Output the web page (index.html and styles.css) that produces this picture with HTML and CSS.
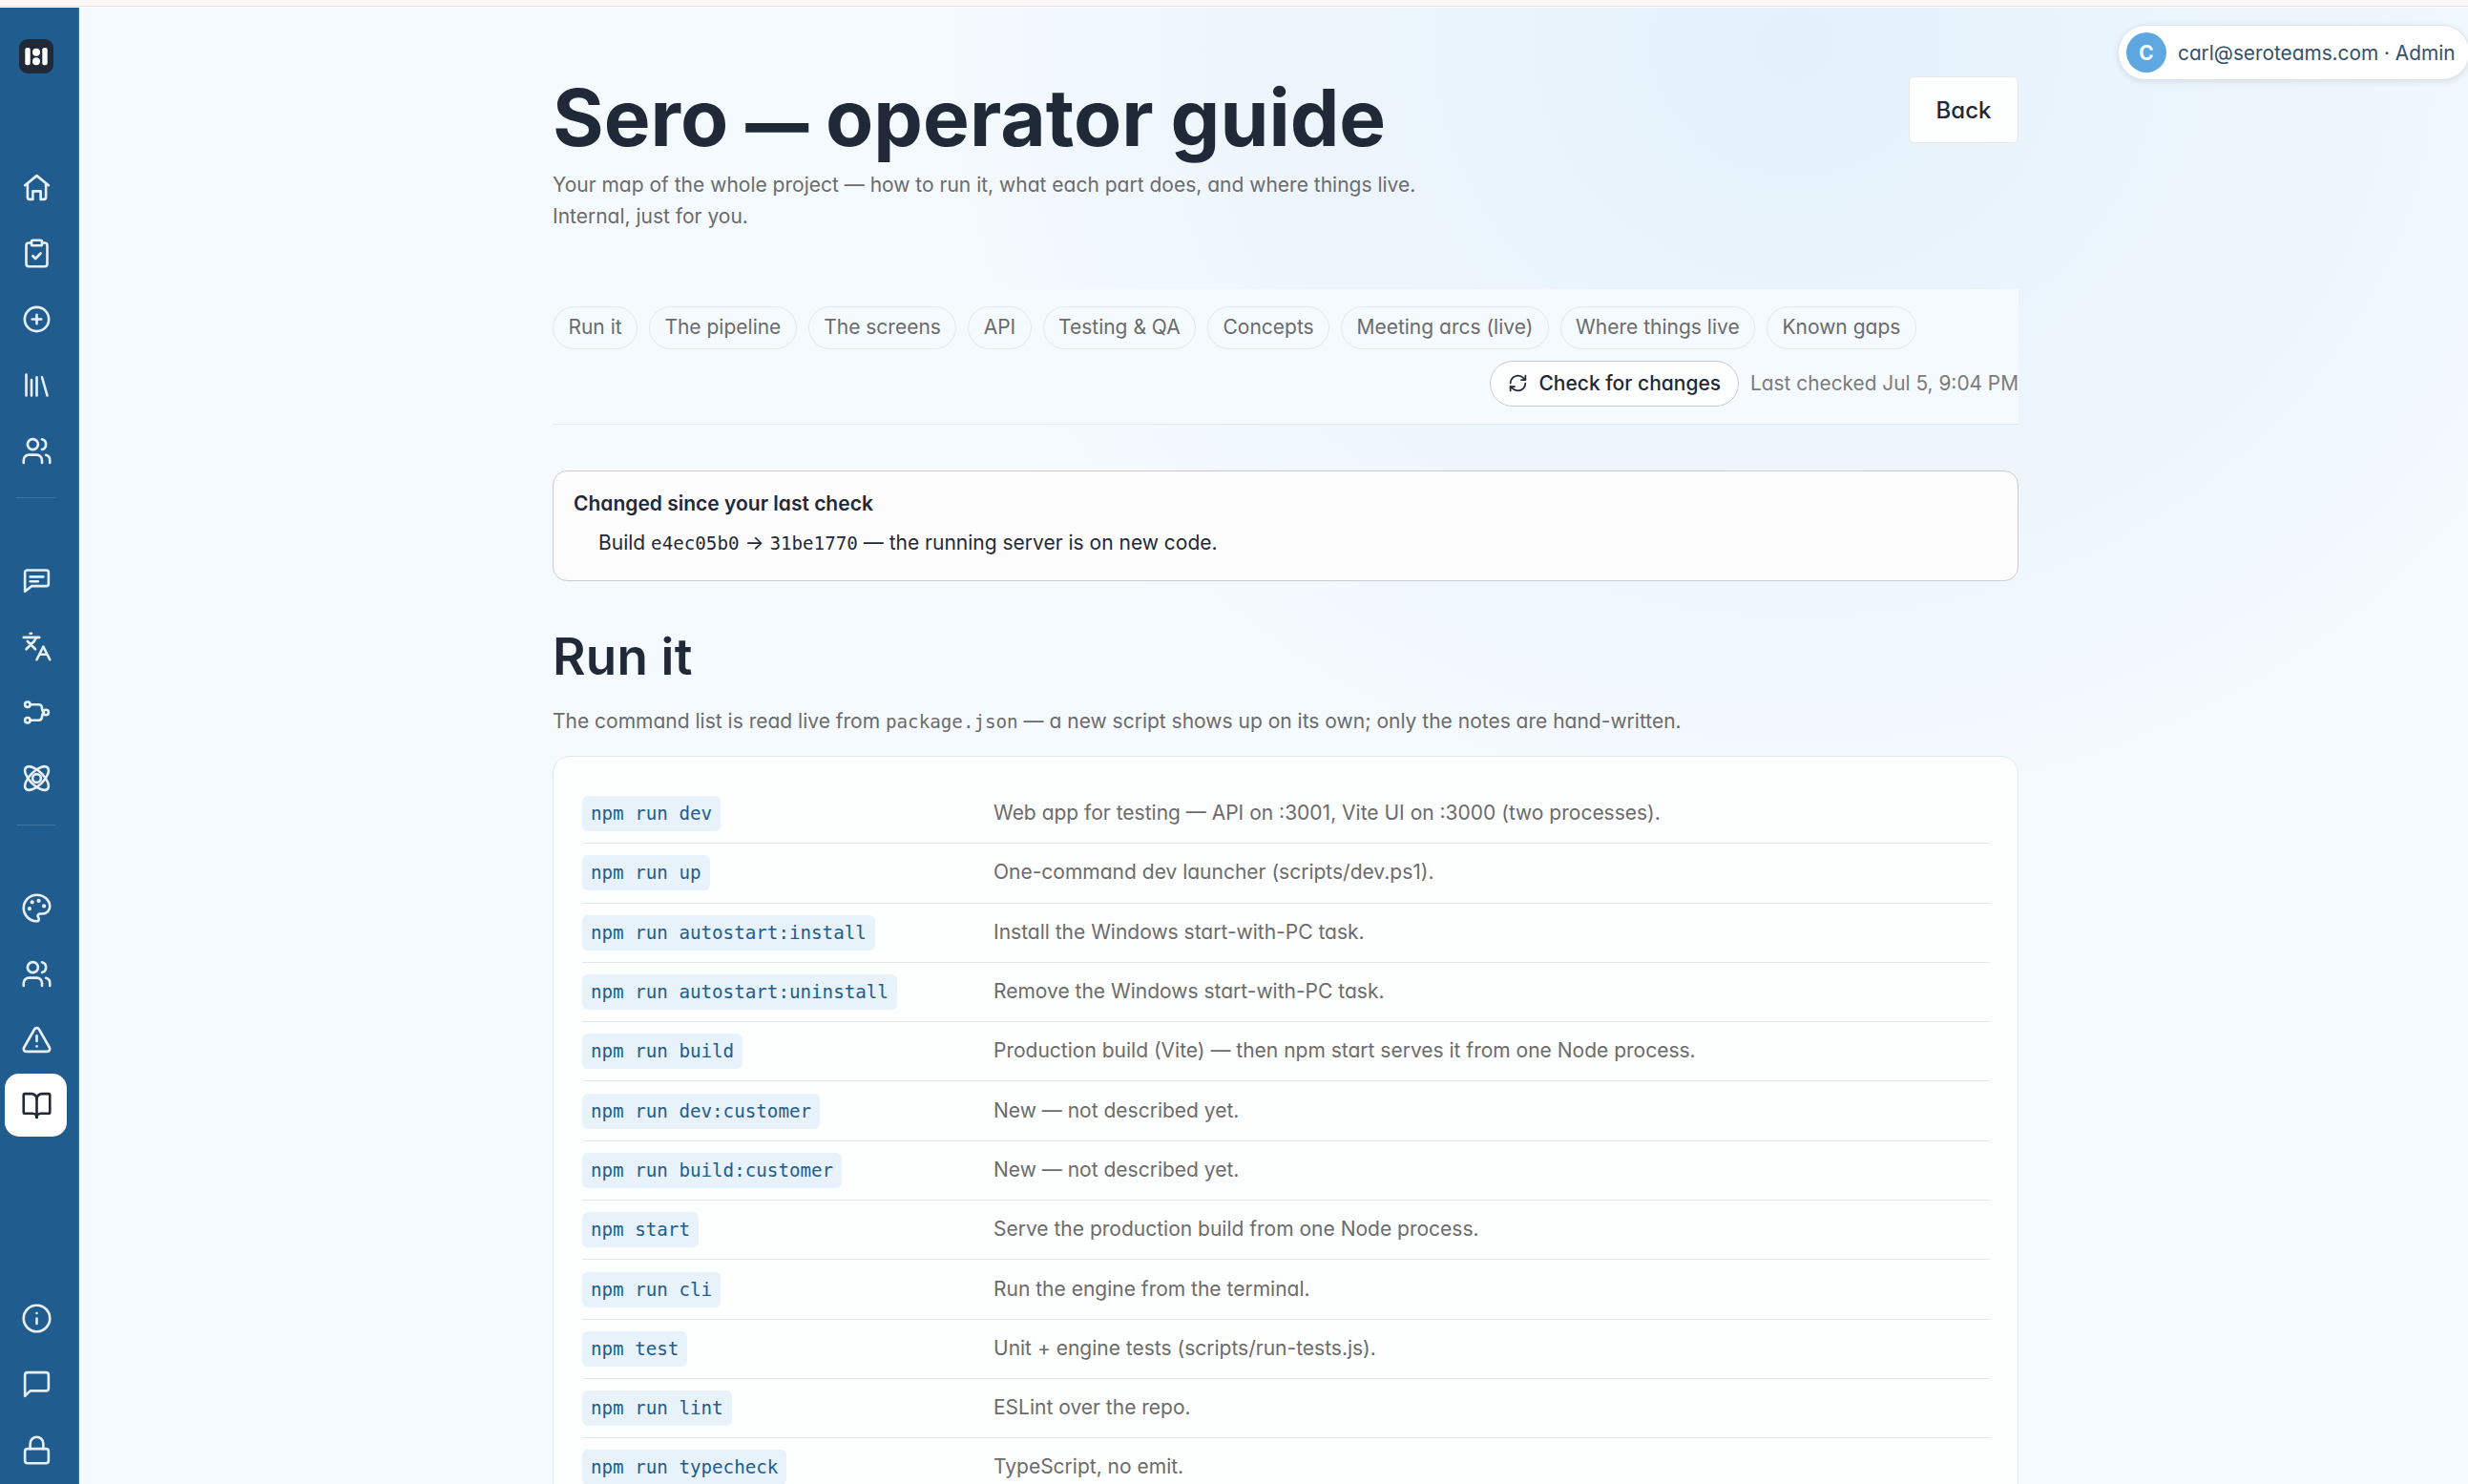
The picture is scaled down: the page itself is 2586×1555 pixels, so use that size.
FILE: index.html
```html
<!DOCTYPE html>
<html lang="en">
<head>
    <meta charset="UTF-8">
    <meta name="viewport" content="width=device-width, initial-scale=1.0">
    <title>Sero — operator guide</title>
    <link rel="stylesheet" href="styles.css">
</head>
<body>
    <div class="top-strip"></div>

    <div class="app">
        <!-- Sidebar -->
        <aside class="sidebar">
            <div class="logo">
                <svg viewBox="0 0 36 36">
                    <rect x="6.3" y="9" width="5.4" height="18.3" rx="2"/>
                    <circle cx="18" cy="13.7" r="4"/>
                    <circle cx="18" cy="23.2" r="4"/>
                    <rect x="24.3" y="9" width="5.4" height="18.3" rx="2"/>
                </svg>
            </div>

            <nav class="nav-group">
                <a class="nav-item"><svg viewBox="0 0 24 24"><path d="M3 10.300 12 3l9 7.300"/><path d="M5 9v10.500A1.500 1.500 0 0 0 6.500 21H9v-6.200h6V21h2.500a1.500 1.500 0 0 0 1.500-1.500V9"/></svg></a>
                <a class="nav-item"><svg viewBox="0 0 24 24"><rect x="8" y="2" width="8" height="4" rx="1"/><path d="M16 4h2a2 2 0 0 1 2 2v14a2 2 0 0 1-2 2H6a2 2 0 0 1-2-2V6a2 2 0 0 1 2-2h2"/><path d="m9 14 2 2 4-4"/></svg></a>
                <a class="nav-item"><svg viewBox="0 0 24 24"><circle cx="12" cy="12" r="9.2"/><path d="M12 8.500v7M8.500 12h7"/></svg></a>
                <a class="nav-item"><svg viewBox="0 0 24 24"><path d="m16 6 4 14M12 6v14M8 8v12M4 4v16"/></svg></a>
                <a class="nav-item"><svg viewBox="0 0 24 24"><path d="M16 21v-2a4 4 0 0 0-4-4H6a4 4 0 0 0-4 4v2"/><circle cx="9" cy="7" r="4"/><path d="M22 21v-2a4 4 0 0 0-3-3.870"/><path d="M16 3.130a4 4 0 0 1 0 7.750"/></svg></a>
            </nav>
            <div class="nav-divider"></div>

            <nav class="nav-group">
                <a class="nav-item"><svg viewBox="0 0 24 24"><path d="M3 20.200V5.700A1.700 1.700 0 0 1 4.700 4h14.600A1.700 1.700 0 0 1 21 5.700v8.700a1.700 1.700 0 0 1-1.700 1.700H8z"/><path d="M7 9h10M7 12.500h6"/></svg></a>
                <a class="nav-item"><svg viewBox="0 0 24 24"><path d="m5 8 6 6M4 14l6-6 2-3M2 5h12M7 2h1M22 22l-5-10-5 10M14 18h6"/></svg></a>
                <a class="nav-item"><svg viewBox="0 0 24 24"><circle cx="5" cy="6" r="2"/><circle cx="5" cy="18" r="2"/><circle cx="19" cy="12" r="2"/><path d="M7 6h6.500a2.500 2.500 0 0 1 2.500 2.500c0 1.800.6 2.800 1.400 3.300"/><path d="M7 18h6.500a2.500 2.500 0 0 0 2.500-2.500c0-1.800.6-2.800 1.400-3.300"/></svg></a>
                <a class="nav-item"><svg viewBox="0 0 24 24"><circle cx="12" cy="12" r="3.200"/><path d="M20.200 20.200c2.040-2.030.02-7.360-4.500-11.900-4.540-4.520-9.870-6.540-11.900-4.500-2.040 2.030-.02 7.360 4.500 11.900 4.540 4.520 9.870 6.540 11.900 4.500Z"/><path d="M15.700 15.700c4.520-4.540 6.540-9.870 4.500-11.900-2.030-2.040-7.360-.02-11.900 4.500-4.520 4.540-6.540 9.870-4.500 11.900 2.030 2.040 7.360.02 11.900-4.500Z"/></svg></a>
            </nav>
            <div class="nav-divider"></div>

            <nav class="nav-group">
                <a class="nav-item"><svg viewBox="0 0 24 24"><circle class="dot" cx="13.500" cy="6.500" r=".6"/><circle class="dot" cx="17.500" cy="10.500" r=".6"/><circle class="dot" cx="8.500" cy="7.500" r=".6"/><circle class="dot" cx="6.500" cy="12.500" r=".6"/><path d="M12 2C6.500 2 2 6.500 2 12s4.500 10 10 10c.926 0 1.648-.746 1.648-1.688 0-.437-.18-.835-.437-1.125-.29-.289-.438-.652-.438-1.125a1.640 1.640 0 0 1 1.668-1.668h1.996c3.051 0 5.555-2.503 5.555-5.554C21.965 6.012 17.461 2 12 2z"/></svg></a>
                <a class="nav-item"><svg viewBox="0 0 24 24"><path d="M16 21v-2a4 4 0 0 0-4-4H6a4 4 0 0 0-4 4v2"/><circle cx="9" cy="7" r="4"/><path d="M22 21v-2a4 4 0 0 0-3-3.870"/><path d="M16 3.130a4 4 0 0 1 0 7.750"/></svg></a>
                <a class="nav-item"><svg viewBox="0 0 24 24"><path d="m21.730 18-8-14a2 2 0 0 0-3.480 0l-8 14A2 2 0 0 0 4 21h16a2 2 0 0 0 1.730-3Z"/><path d="M12 9v4M12 17h.01"/></svg></a>
                <a class="nav-item active"><svg viewBox="0 0 24 24"><path d="M12 7v14"/><path d="M3 18a1 1 0 0 1-1-1V4a1 1 0 0 1 1-1h5a4 4 0 0 1 4 4 4 4 0 0 1 4-4h5a1 1 0 0 1 1 1v13a1 1 0 0 1-1 1h-6a3 3 0 0 0-3 3 3 3 0 0 0-3-3z"/></svg></a>
            </nav>

            <nav class="nav-group nav-bottom">
                <a class="nav-item"><svg viewBox="0 0 24 24"><circle cx="12" cy="12" r="10"/><path d="M12 16v-4M12 8h.01"/></svg></a>
                <a class="nav-item"><svg viewBox="0 0 24 24"><path d="M21 15a2 2 0 0 1-2 2H7l-4 4V5a2 2 0 0 1 2-2h14a2 2 0 0 1 2 2z"/></svg></a>
                <a class="nav-item"><svg viewBox="0 0 24 24"><rect x="3" y="11" width="18" height="11" rx="2"/><path d="M7 11V7a5 5 0 0 1 10 0v4"/></svg></a>
            </nav>
        </aside>

        <!-- Page content -->
        <main class="main">
            <div class="user-pill">
                <span class="avatar">C</span>
                <span class="user-name">carl@seroteams.com · Admin</span>
            </div>

            <div class="page">
                <header class="page-header">
                    <div>
                        <h1>Sero <span class="dash">—</span> operator guide</h1>
                        <p class="lead">Your map of the whole project — how to run it, what each part does, and where things live.<br>Internal, just for you.</p>
                    </div>
                    <button class="back-btn">Back</button>
                </header>

                <div class="toc">
                    <div class="toc-links">
                        <a class="chip">Run it</a>
                        <a class="chip">The pipeline</a>
                        <a class="chip">The screens</a>
                        <a class="chip">API</a>
                        <a class="chip">Testing &amp; QA</a>
                        <a class="chip">Concepts</a>
                        <a class="chip">Meeting arcs (live)</a>
                        <a class="chip">Where things live</a>
                        <a class="chip">Known gaps</a>
                    </div>
                    <div class="toc-check">
                        <button class="check-btn">
                            <svg viewBox="0 0 24 24"><path d="M3 12a9 9 0 0 1 9-9 9.750 9.750 0 0 1 6.740 2.740L21 8"/><path d="M21 3v5h-5"/><path d="M21 12a9 9 0 0 1-9 9 9.750 9.750 0 0 1-6.740-2.740L3 16"/><path d="M8 16H3v5"/></svg>
                            Check for changes
                        </button>
                        <span class="last-checked">Last checked Jul 5, 9:04 PM</span>
                    </div>
                </div>

                <section class="changes">
                    <h3>Changed since your last check</h3>
                    <p>Build <code>e4ec05b0</code> → <code>31be1770</code> — the running server is on new code.</p>
                </section>

                <h2>Run it</h2>
                <p class="section-note">The command list is read live from <code>package.json</code> — a new script shows up on its own; only the notes are hand-written.</p>

                <!-- Commands -->
                <div class="card">
                    <div class="cmd-row"><code>npm run dev</code><span>Web app for testing — API on :3001, Vite UI on :3000 (two processes).</span></div>
                    <div class="cmd-row"><code>npm run up</code><span>One-command dev launcher (scripts/dev.ps1).</span></div>
                    <div class="cmd-row"><code>npm run autostart:install</code><span>Install the Windows start-with-PC task.</span></div>
                    <div class="cmd-row"><code>npm run autostart:uninstall</code><span>Remove the Windows start-with-PC task.</span></div>
                    <div class="cmd-row"><code>npm run build</code><span>Production build (Vite) — then npm start serves it from one Node process.</span></div>
                    <div class="cmd-row"><code>npm run dev:customer</code><span>New — not described yet.</span></div>
                    <div class="cmd-row"><code>npm run build:customer</code><span>New — not described yet.</span></div>
                    <div class="cmd-row"><code>npm start</code><span>Serve the production build from one Node process.</span></div>
                    <div class="cmd-row"><code>npm run cli</code><span>Run the engine from the terminal.</span></div>
                    <div class="cmd-row"><code>npm test</code><span>Unit + engine tests (scripts/run-tests.js).</span></div>
                    <div class="cmd-row"><code>npm run lint</code><span>ESLint over the repo.</span></div>
                    <div class="cmd-row"><code>npm run typecheck</code><span>TypeScript, no emit.</span></div>
                </div>
            </div>
        </main>
    </div>
</body>
</html>
```
FILE: styles.css
```css
* {
    box-sizing: border-box;
}

body {
    margin: 0;
    height: 1555px;
    overflow: hidden;
    display: flex;
    flex-direction: column;
    font-family: Inter, sans-serif;
    font-feature-settings: "cv11";
    font-size: 21px;
    color: #1f2937;
    background: #f5fafe;
}

h1, h2, h3, p {
    margin: 0;
}

code {
    font-family: "DejaVu Sans Mono", monospace;
    font-size: 19.2px;
}

.top-strip {
    height: 8px;
    flex: none;
    background: #fdf8f8;
    border-bottom: 1px solid #fff;
    box-shadow: inset 0 -1px 0 #e5e1e2;
}

.app {
    flex: 1;
    min-height: 0;
    display: flex;
    overflow: hidden;
}

/* Sidebar */
.sidebar {
    width: 83px;
    flex: none;
    display: flex;
    flex-direction: column;
    padding: 33px 0 3px 5px;
    background: #205d8e;
    border-right: 1px solid #3a75a4;
}

.logo {
    width: 36px;
    height: 36px;
    margin: 0 0 86px 15px;
    border-radius: 9px;
    background: #1f2937;
}

.logo svg {
    display: block;
    fill: #fff;
}

.nav-group {
    display: flex;
    flex-direction: column;
    gap: 3px;
}

.nav-item {
    width: 65px;
    height: 66px;
    display: flex;
    align-items: center;
    justify-content: center;
    padding-left: 2px;
    border-radius: 15px;
    color: #e9eff8;
}

.nav-item svg {
    width: 33px;
    height: 33px;
    fill: none;
    stroke: currentColor;
    stroke-width: 1.9;
    stroke-linecap: round;
    stroke-linejoin: round;
}

.nav-item .dot {
    fill: currentColor;
}

.nav-item.active {
    background: #fff;
    color: #1f2937;
}

.nav-divider {
    width: 41px;
    height: 1px;
    margin: 15.5px 0 53.5px 12px;
    background: #3f76a3;
}

.nav-bottom {
    margin-top: auto;
}

/* Main area */
.main {
    flex: 1;
    position: relative;
    padding: 72px 0 0 496px;
    background: radial-gradient(ellipse 950px 850px at 1800px 40px, #e4f1fb 0%, #ecf5fc 50%, #f5fafe 100%);
}

.page {
    width: 1536px;
}

.user-pill {
    position: absolute;
    top: 18px;
    left: 2136px;
    width: 369px;
    height: 58px;
    display: flex;
    align-items: center;
    gap: 12px;
    padding-left: 8px;
    background: #fff;
    border: 1px solid #dde5ec;
    border-radius: 29px;
    box-shadow: 0 2px 6px rgba(31, 41, 55, 0.1);
    font-size: 20.8px;
    color: #35506a;
    white-space: nowrap;
}

.avatar {
    width: 42px;
    height: 42px;
    display: flex;
    align-items: center;
    justify-content: center;
    border-radius: 50%;
    background: #5ea7e0;
    color: #fff;
    font-weight: 700;
}

/* Header */
.page-header {
    display: flex;
    justify-content: space-between;
    align-items: flex-start;
    height: 223px;
}

h1 {
    height: 88px;
    font-size: 82px;
    line-height: 88px;
    font-weight: 700;
    font-feature-settings: normal;
    word-spacing: -1.5px;
}

h1 .dash {
    font-size: 66px;
    line-height: 1;
    font-weight: 900;
}

.lead {
    margin-top: 9px;
    line-height: 33px;
    color: #6b6b6b;
}

.back-btn {
    width: 115px;
    height: 70px;
    font: inherit;
    font-size: 24px;
    font-weight: 500;
    font-feature-settings: inherit;
    color: #1f2937;
    background: #fdfefe;
    border: 1px solid #e8e8e8;
    border-radius: 6px;
}

/* Section links */
.toc {
    display: flex;
    flex-direction: column;
    gap: 12px;
    height: 142px;
    padding-top: 18px;
    background: #f5fafe;
    border-bottom: 1px solid #e5e8ea;
}

.toc-links {
    display: flex;
    gap: 12px;
}

.chip {
    height: 45px;
    padding: 0 15.4px;
    line-height: 42px;
    border: 1px solid #e5e8ea;
    border-radius: 23px;
    color: #6b6b6b;
}

.toc-check {
    display: flex;
    justify-content: flex-end;
    align-items: center;
    gap: 12px;
}

.check-btn {
    display: flex;
    align-items: center;
    gap: 11px;
    height: 48px;
    padding: 0 18px 2px;
    font: inherit;
    font-weight: 500;
    font-feature-settings: inherit;
    color: #1f2937;
    background: #fdfefe;
    border: 1px solid #c9cccf;
    border-radius: 24px;
}

.check-btn svg {
    width: 21px;
    height: 21px;
    fill: none;
    stroke: currentColor;
    stroke-width: 2;
    stroke-linecap: round;
    stroke-linejoin: round;
}

.last-checked {
    padding-bottom: 2px;
    font-size: 20.85px;
    color: #7b7b7b;
}

/* Change notice */
.changes {
    height: 116px;
    margin-top: 48px;
    padding: 17px 21px;
    background: #fcfcfd;
    border: 1px solid #c9cccf;
    border-radius: 15px;
}

.changes h3 {
    font-size: 21px;
    line-height: 33px;
    font-weight: 600;
}

.changes p {
    margin-top: 8px;
    padding-left: 26px;
    line-height: 33px;
}

h2 {
    margin-top: 49px;
    font-size: 53px;
    line-height: 60px;
    font-weight: 600;
    letter-spacing: 0.2px;
}

.section-note {
    margin-top: 21px;
    line-height: 33px;
    color: #6b6b6b;
}

/* Command list */
.card {
    height: 900px;
    margin-top: 19px;
    padding: 29px 29px 29px 30px;
    background: #fdfefe;
    border: 1px solid #e2e8eb;
    border-radius: 18px;
}

.cmd-row {
    display: grid;
    grid-template-columns: 431px 1fr;
    align-items: center;
    height: 62.3px;
    border-bottom: 1px solid #e4e7ea;
    color: #6b6b6b;
}

.cmd-row code {
    justify-self: start;
    padding: 0 9px;
    line-height: 37px;
    border-radius: 6px;
    background: #e8f2fa;
    color: #205d8e;
}

.cmd-row span {
    padding-bottom: 2px;
}
```
